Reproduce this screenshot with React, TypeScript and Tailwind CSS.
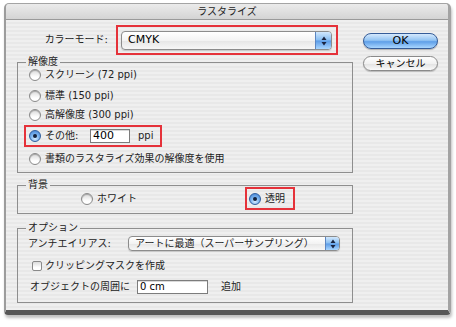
import React from "react";

const font = "font-['DejaVu_Sans','Noto_Sans_CJK_JP',sans-serif]";

function Radio({ on }: { on?: boolean }) {
  if (on) {
    return (
      <span className="flex h-[12px] w-[12px] shrink-0 items-center justify-center rounded-full border border-[#2f5f9e] bg-[radial-gradient(circle_at_50%_75%,#d6ecff_0%,#7db6f0_45%,#3d7bd0_100%)]">
        <span className="h-[4px] w-[4px] rounded-full bg-[#14213a]" />
      </span>
    );
  }
  return (
    <span className="h-[12px] w-[12px] shrink-0 rounded-full border border-[#8a8a8a] bg-[linear-gradient(180deg,#d9d9d9,#ffffff_70%)] shadow-[inset_0_1px_1px_rgba(0,0,0,0.25)]" />
  );
}

function Arrows() {
  return (
    <svg width="6" height="10" viewBox="0 0 6 10" aria-hidden>
      <path d="M3 0.5L5.5 4H0.5Z" fill="#1a2440" />
      <path d="M3 9.5L5.5 6H0.5Z" fill="#1a2440" />
    </svg>
  );
}

function Popup({
  text,
  className,
  stepper,
}: {
  text: string;
  className: string;
  stepper: string;
}) {
  return (
    <div
      className={
        "flex items-stretch rounded-[4px] border border-[#8c8c8c] bg-[linear-gradient(180deg,#ffffff,#f3f3f3_50%,#e6e6e6_52%,#f7f7f7)] shadow-[0_1px_1px_rgba(0,0,0,0.15)] " +
        className
      }
    >
      <span className="flex flex-1 items-center pl-[6px] whitespace-nowrap">
        {text}
      </span>
      <span
        className={
          "flex items-center justify-center rounded-r-[3px] border-l border-[#5b86c2] bg-[linear-gradient(180deg,#d2e8fd,#86bdf2_48%,#5a9ae6_52%,#a9d6ff)] " +
          stepper
        }
      >
        <Arrows />
      </span>
    </div>
  );
}

function Group({
  label,
  className,
  children,
}: {
  label: string;
  className: string;
  children: React.ReactNode;
}) {
  return (
    <div className={"relative border border-[#8e8e8e] " + className}>
      <span className="absolute left-[8px] top-[-7px] bg-[#ececec] px-[2px] text-[10px] leading-[12px]">
        {label}
      </span>
      {children}
    </div>
  );
}

function RadioRow({
  label,
  className,
}: {
  label: string;
  className: string;
}) {
  return (
    <div className={"flex h-[14px] items-center pl-[11px] " + className}>
      <Radio />
      <span className="ml-[4px] text-[10px] leading-[14px] whitespace-nowrap">
        {label}
      </span>
    </div>
  );
}

export default function App() {
  return (
    <div className={"h-[327px] w-[456px] bg-white pl-[4px] pt-[3px] text-[#222] " + font}>
      <div className="flex h-[312px] w-[447px] flex-col rounded-t-[5px] rounded-b-[4px] border-t border-b-[5px] border-l-2 border-r-[3px] border-t-[#a4a4a4] border-b-[#575757] border-l-[#9c9c9c] border-r-[#a3a3a3] bg-[repeating-linear-gradient(180deg,#efefef_0px,#efefef_2px,#e8e8e8_2px,#e8e8e8_4px)] shadow-[1px_3px_3px_rgba(0,0,0,0.25)]">
        <div className="flex h-[16px] shrink-0 items-center justify-center rounded-t-[4px] border-b border-[#9a9a9a] bg-[linear-gradient(180deg,#ebebeb,#d4d4d4)] text-[10px] leading-[14px] text-[#1e1e1e]">
          ラスタライズ
        </div>

        <div className="flex">
          <div className="flex w-[347px] flex-col pl-[11px]">
            <div className="mt-[5px] flex h-[30px] items-center">
              <span className="w-[91px] text-right text-[10px] leading-[14px]">
                カラーモード:
              </span>
              <div className="ml-[8px] h-[30px] w-[222px] border-2 border-[#e5323a] pt-[4px] pr-[4px] pb-[3px] pl-[3px]">
                <Popup
                  text="CMYK"
                  className="h-[19px] text-[11px] text-black"
                  stepper="w-[16px]"
                />
              </div>
            </div>

            <Group label="解像度" className="mt-[7px] h-[111px] w-[336px]">
              <RadioRow label="スクリーン (72 ppi)" className="mt-[5px]" />
              <RadioRow label="標準 (150 ppi)" className="mt-[7px]" />
              <RadioRow label="高解像度 (300 ppi)" className="mt-[5px]" />
              <div className="mt-[3px] ml-[6px] flex h-[22px] w-[138px] items-center border-2 border-[#e5323a] pl-[3px]">
                <Radio on />
                <span className="ml-[4px] w-[45px] text-[10px] leading-[14px]">
                  その他:
                </span>
                <span className="flex h-[14px] w-[40px] items-center border border-[#7c7c7c] bg-white pl-[2px] text-[11px] leading-[12px] text-black shadow-[inset_0_1px_0_rgba(0,0,0,0.15)]">
                  400
                </span>
                <span className="ml-[8px] text-[10px] leading-[14px]">ppi</span>
              </div>
              <RadioRow
                label="書類のラスタライズ効果の解像度を使用"
                className="mt-[5px]"
              />
            </Group>

            <Group label="背景" className="mt-[12px] h-[29px] w-[336px]">
              <div className="mt-[1px] flex items-center">
                <div className="flex w-[227px] items-center pl-[63px]">
                  <Radio />
                  <span className="ml-[4px] text-[10px] leading-[14px]">
                    ホワイト
                  </span>
                </div>
                <div className="flex h-[23px] w-[50px] items-center border-2 border-[#e5323a] pl-[2px]">
                  <Radio on />
                  <span className="ml-[4px] text-[10px] leading-[14px]">
                    透明
                  </span>
                </div>
              </div>
            </Group>

            <Group label="オプション" className="mt-[14px] h-[75px] w-[336px]">
              <div className="mt-[7px] flex h-[15px] items-center pl-[10px]">
                <span className="w-[100px] text-[10px] leading-[14px]">
                  アンチエイリアス:
                </span>
                <Popup
                  text="アートに最適（スーパーサンプリング）"
                  className="h-[15px] w-[212px] text-[10px] leading-[13px]"
                  stepper="w-[14px]"
                />
              </div>
              <div className="mt-[8px] flex h-[14px] items-center pl-[14px]">
                <span className="h-[10px] w-[10px] rounded-[2px] border border-[#8a8a8a] bg-[linear-gradient(180deg,#dcdcdc,#ffffff_70%)]" />
                <span className="ml-[3px] text-[10px] leading-[14px]">
                  クリッピングマスクを作成
                </span>
              </div>
              <div className="mt-[7px] flex h-[14px] items-center pl-[12px]">
                <span className="w-[107px] text-[10px] leading-[14px] whitespace-nowrap">
                  オブジェクトの周囲に
                </span>
                <span className="flex h-[14px] w-[71px] items-center border border-[#7c7c7c] bg-white pl-[2px] text-[10px] leading-[12px] text-black shadow-[inset_0_1px_0_rgba(0,0,0,0.15)]">
                  0 cm
                </span>
                <span className="ml-[13px] text-[10px] leading-[14px]">
                  追加
                </span>
              </div>
            </Group>
          </div>

          <div className="ml-[10px] flex w-[75px] flex-col pt-[13px]">
            <button className="flex h-[16px] items-center justify-center rounded-full border border-[#355c98] bg-[linear-gradient(180deg,#d5e9fd,#93c4f3_45%,#5f9fe8_55%,#a9d6ff)] text-[11px] leading-[14px] text-black shadow-[0_1px_1px_rgba(0,0,0,0.25)]">
              OK
            </button>
            <button className="mt-[7px] flex h-[15px] items-center justify-center rounded-full border border-[#8a8a8a] bg-[linear-gradient(180deg,#ffffff,#f1f1f1_50%,#e2e2e2_52%,#fafafa)] text-[10px] leading-[13px] text-black shadow-[0_1px_1px_rgba(0,0,0,0.2)]">
              キャンセル
            </button>
          </div>
        </div>
      </div>
    </div>
  );
}
